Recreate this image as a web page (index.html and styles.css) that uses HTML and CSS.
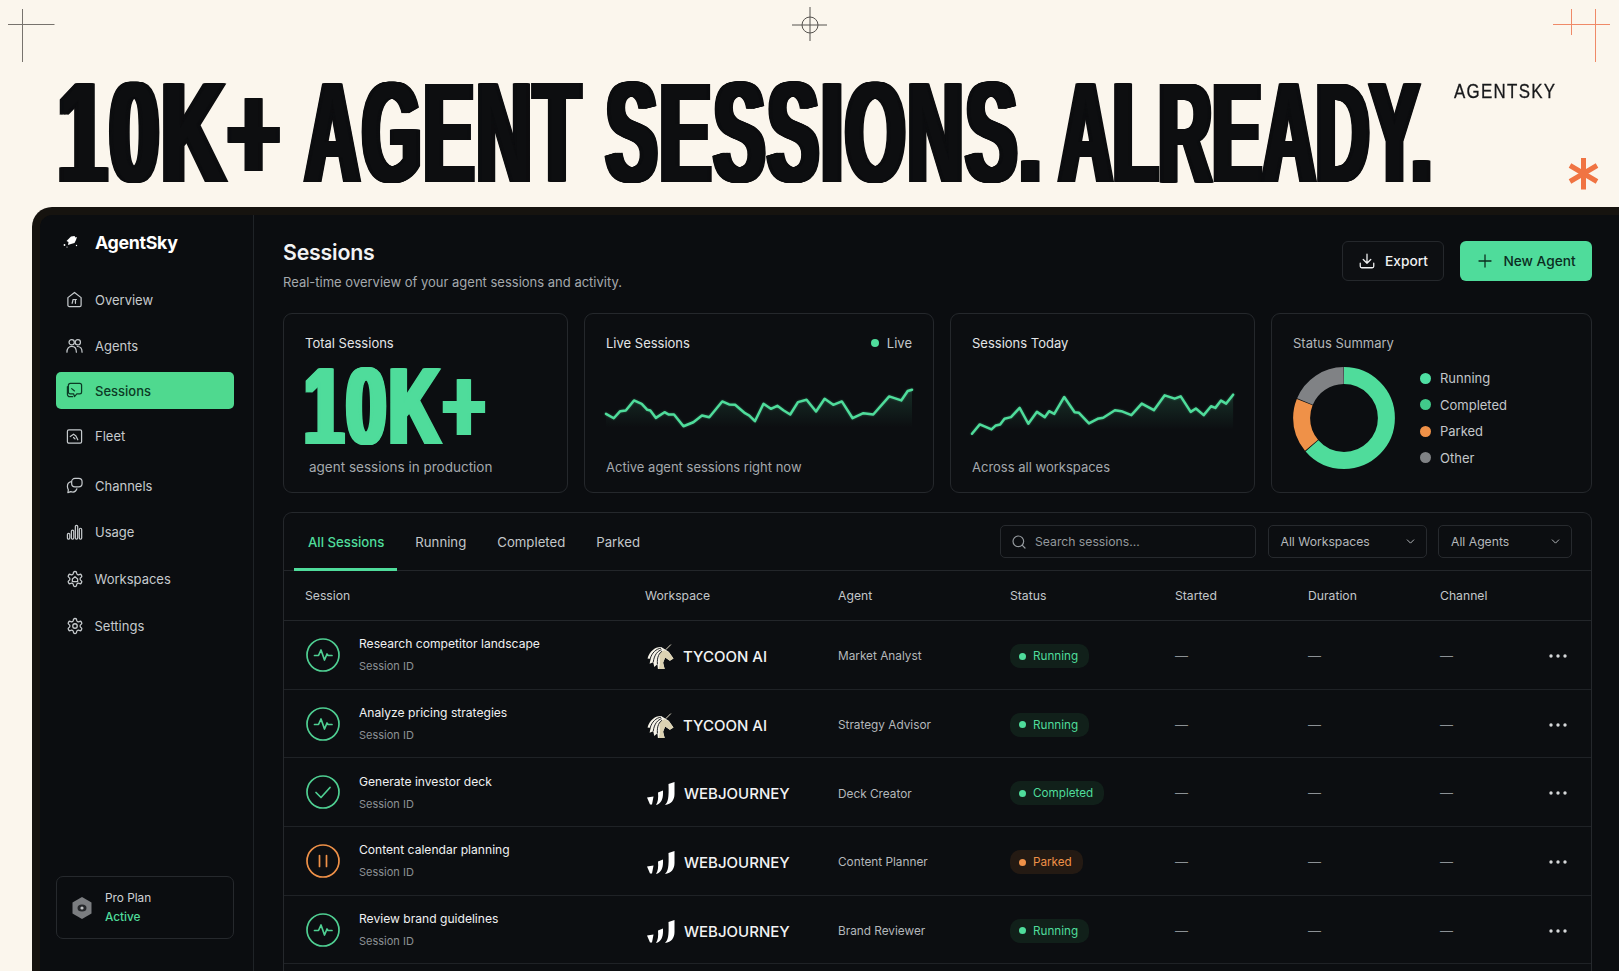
FILE: index.html
```html
<!DOCTYPE html>
<html lang="en">
<head>
<meta charset="utf-8">
<title>AgentSky</title>
<link rel="stylesheet" href="styles.css">
</head>
<body>
<svg width="0" height="0" class="defs">
  <defs>
    <linearGradient id="fade" x1="0" y1="0" x2="0" y2="1">
      <stop offset="0" stop-color="#4fdc9b" stop-opacity=".16"/>
      <stop offset=".85" stop-color="#4fdc9b" stop-opacity="0"/>
    </linearGradient>
    <symbol id="gear" viewBox="0 0 24 24"><path d="M12.22 2h-.44a2 2 0 0 0-2 2v.18a2 2 0 0 1-1 1.73l-.43.25a2 2 0 0 1-2 0l-.15-.08a2 2 0 0 0-2.73.73l-.22.38a2 2 0 0 0 .73 2.73l.15.1a2 2 0 0 1 1 1.72v.51a2 2 0 0 1-1 1.74l-.15.09a2 2 0 0 0-.73 2.73l.22.38a2 2 0 0 0 2.73.73l.15-.08a2 2 0 0 1 2 0l.43.25a2 2 0 0 1 1 1.73V20a2 2 0 0 0 2 2h.44a2 2 0 0 0 2-2v-.18a2 2 0 0 1 1-1.73l.43-.25a2 2 0 0 1 2 0l.15.08a2 2 0 0 0 2.73-.73l.22-.39a2 2 0 0 0-.73-2.73l-.15-.08a2 2 0 0 1-1-1.74v-.5a2 2 0 0 1 1-1.74l.15-.09a2 2 0 0 0 .73-2.73l-.22-.38a2 2 0 0 0-2.73-.73l-.15.08a2 2 0 0 1-2 0l-.43-.25a2 2 0 0 1-1-1.73V4a2 2 0 0 0-2-2z"/></symbol>
    <symbol id="horse" viewBox="0 0 26 24">
      <path fill="#f6f3e8" stroke="none" d="M14 3C8 2.500 2.500 7 .5 14L3.500 14.500 2.500 19 6 17.500 7 22 10 19.500 10.500 24H17L15.500 18 17.500 13 22 16 25.500 14 21 7.500z"/>
      <path fill="#dcd2b2" stroke="none" d="M12 12C12 9 14 6.500 17 6L21 8 25.500 14 22 16 17.500 13 15.500 18 17 24H11C13 20 12.500 15 12 12z"/>
      <path fill="none" stroke="#12141a" stroke-width=".9" d="M13.500 4C9 4.500 4.500 8.500 3 14.500M14 5.500C10.500 6.500 7 10 6 17.500M14.500 7C12 8.500 9.500 12 10 19.500"/>
      <path fill="none" stroke="#efe8d2" stroke-width=".9" d="M18 5.500 23 .5"/>
    </symbol>
    <symbol id="wj" viewBox="0 0 28 23">
      <path fill="#fff" stroke="none" d="M0 15.500 6.500 14.500 5 22.500 3 22.500zM16 8.500V11.500C16 17 14 22 9 23 11 20 11.500 16 11 10.500zM27.500 0V12C27.500 18 24.500 22 18 23 21 20 22 16 21.500 2z"/>
    </symbol>
    <symbol id="pulse" viewBox="0 0 34 34"><circle cx="17" cy="17" r="16"/><path d="M8.500 17.500h4l2.500-5.500 3.500 10 2.500-6 1 1.500h4"/></symbol>
    <symbol id="dots" viewBox="0 0 18 4"><circle cx="2" cy="2" r="1.700"/><circle cx="9" cy="2" r="1.700"/><circle cx="16" cy="2" r="1.700"/></symbol>
  </defs>
</svg>

<header class="hero">
  <svg class="marks" width="1619" height="207" viewBox="0 0 1619 207" fill="none">
    <path stroke="#77736d" d="M8 24.500h46.500M22.500 9v53"/>
    <path stroke="#55524e" d="M792 25h35M810 7v34"/>
    <circle cx="810" cy="25" r="8" stroke="#55524e"/>
    <path stroke="#ef8a68" d="M1553 24.500h57M1571.500 9v26M1595.500 9v53"/>
    <path stroke="#f07443" stroke-width="5" d="M1583.500 158v31.500M1570 165.500l27 16M1597 165.500l-27 16"/>
  </svg>
  <h1 class="headline">
    <span class="word w1">10K+</span>
    <span class="word w2">AGENT</span>
    <span class="word w3">SESSIONS.</span>
    <span class="word w4">ALREADY.</span>
  </h1>
  <div class="brandmark">AGENTSKY</div>
</header>

<div class="panel">
  <aside class="sidebar">
    <div class="logo">
      <svg width="16" height="16" viewBox="0 0 16 16" fill="#fff"><path d="M5 5.500 8 2.500l3.500-.5 1 1.500 1.500-.5-1 3-1.500 3L8 10 5 11l.5-3L3.500 7z"/><circle cx="1.500" cy="11" r=".9"/><circle cx="13.500" cy="11.500" r=".7"/><circle cx="4" cy="13" r=".6"/></svg>
      <span>AgentSky</span>
    </div>
    <nav class="nav">
      <a class="nav-item"><svg class="ni" viewBox="0 0 18 18"><path d="M2 7 9 1.500 16 7v8a1.500 1.500 0 0 1-1.500 1.500h-11A1.500 1.500 0 0 1 2 15z"/><path d="M6.500 13 7.500 9h3.500M10 9v4"/></svg>Overview</a>
      <a class="nav-item"><svg class="ni" viewBox="0 0 18 18"><circle cx="6" cy="4.500" r="2.800"/><circle cx="12.500" cy="4.500" r="2.800"/><path d="M1 15c0-4 2-6.200 5-6.200S11 11 11 15M12 9c3 0 5 2 5 6"/></svg>Agents</a>
      <a class="nav-item active"><svg class="ni" viewBox="0 0 18 18"><path d="M4.500 1.500h10A2 2 0 0 1 16.500 3.500v7a2 2 0 0 1-2 2h-3L9 15.500l-1-3H4.500a2 2 0 0 1-2-2v-7a2 2 0 0 1 2-2z"/><path d="M1.500 5v8a2.500 2.500 0 0 0 2.500 2.500h3M6 7l3 2.500"/></svg>Sessions</a>
      <a class="nav-item item-fleet"><svg class="ni" viewBox="0 0 18 18"><rect x="1.500" y="2" width="15" height="14" rx="1.500"/><path d="M4.500 9 8 6.500l2.500 2 2 4M8 10l1.500 1.500"/></svg>Fleet</a>
      <a class="nav-item item-channels"><svg class="ni" viewBox="0 0 18 18"><rect x="6" y="1.500" width="11" height="9" rx="3.500"/><path d="M5.500 5C3 5.500 1.500 7.500 1.500 10c0 1.500.5 2.500 1 3.500L2 16.500l3-1c3 1 5.500 0 6.500-3"/></svg>Channels</a>
      <a class="nav-item"><svg class="ni" viewBox="0 0 18 18"><rect x="1.500" y="10" width="2.500" height="6" rx="1.200"/><rect x="5.700" y="6.500" width="2.500" height="9.500" rx="1.200"/><rect x="9.900" y="1.500" width="2.500" height="14.500" rx="1.200"/><rect x="14.100" y="4.500" width="2.500" height="11.500" rx="1.200"/></svg>Usage</a>
      <a class="nav-item"><svg class="ni ni-gear" viewBox="0 0 24 24"><use href="#gear"/><path d="M8.500 12 12 9l3.500 3v3.500h-7z"/></svg>Workspaces</a>
      <a class="nav-item"><svg class="ni ni-gear" viewBox="0 0 24 24"><use href="#gear"/><circle cx="12" cy="12" r="3"/></svg>Settings</a>
    </nav>
    <div class="plan">
      <svg width="20" height="22" viewBox="0 0 20 22"><path fill="#7b7d80" d="M10 0 19.500 5.500v11L10 22 .5 16.500v-11z"/><ellipse cx="10" cy="11" rx="4.500" ry="3.500" fill="#26282b"/><circle cx="10" cy="11" r="1.600" fill="#bfc1c3"/></svg>
      <div class="plan-text">
        <div class="plan-name">Pro Plan</div>
        <div class="plan-state">Active</div>
      </div>
    </div>
  </aside>

  <main class="main">
    <div class="topbar">
      <div>
        <h2 class="page-title">Sessions</h2>
        <p class="page-sub">Real-time overview of your agent sessions and activity.</p>
      </div>
      <div class="actions">
        <button class="btn btn-ghost"><svg viewBox="0 0 24 24" width="18" height="18"><path d="M21 15v4a2 2 0 0 1-2 2H5a2 2 0 0 1-2-2v-4M7 10l5 5 5-5M12 15V3"/></svg>Export</button>
        <button class="btn btn-primary"><svg viewBox="0 0 24 24" width="18" height="18"><path d="M12 4v16M4 12h16"/></svg>New Agent</button>
      </div>
    </div>

    <section class="cards">
      <div class="card">
        <div class="card-title">Total Sessions</div>
        <div class="card-body"><span class="big">10K+</span></div>
        <div class="card-sub sub-inset">agent sessions in production</div>
      </div>
      <div class="card">
        <div class="card-title card-title-row">Live Sessions<span class="live"><i class="dot"></i>Live</span></div>
        <div class="card-body">
          <svg class="spark spark-live" viewBox="772 260 711 140" preserveAspectRatio="none">
            <path class="area" d="M772 340 790 353 805 332 818 330 837 300 855 310 868 328 875 330 888 352 908 335 918 342 930 342 952 377 975 365 995 345 1012 350 1042 303 1058 312 1072 313 1095 338 1105 345 1118 362 1138 310 1155 325 1170 316 1185 330 1200 342 1218 305 1238 298 1260 333 1280 295 1300 313 1320 303 1345 353 1370 338 1393 342 1430 288 1458 300 1473 272 1483 268V400H772Z"/>
            <path class="line" d="M772 340 790 353 805 332 818 330 837 300 855 310 868 328 875 330 888 352 908 335 918 342 930 342 952 377 975 365 995 345 1012 350 1042 303 1058 312 1072 313 1095 338 1105 345 1118 362 1138 310 1155 325 1170 316 1185 330 1200 342 1218 305 1238 298 1260 333 1280 295 1300 313 1320 303 1345 353 1370 338 1393 342 1430 288 1458 300 1473 272 1483 268"/>
          </svg>
        </div>
        <div class="card-sub">Active agent sessions right now</div>
      </div>
      <div class="card">
        <div class="card-title">Sessions Today</div>
        <div class="card-body">
          <svg class="spark spark-today" viewBox="75 280 605 130" preserveAspectRatio="none">
            <path class="area" d="M75 403 93 375 120 390 130 378 140 375 150 358 165 353 185 325 205 373 225 337 243 353 253 335 265 343 288 292 312 338 322 340 345 372 365 358 378 355 405 332 420 335 443 347 467 312 495 332 520 287 543 297 557 290 580 337 592 327 610 347 627 320 637 325 650 303 662 312 678 285V410H75Z"/>
            <path class="line" d="M75 403 93 375 120 390 130 378 140 375 150 358 165 353 185 325 205 373 225 337 243 353 253 335 265 343 288 292 312 338 322 340 345 372 365 358 378 355 405 332 420 335 443 347 467 312 495 332 520 287 543 297 557 290 580 337 592 327 610 347 627 320 637 325 650 303 662 312 678 285"/>
          </svg>
        </div>
        <div class="card-sub">Across all workspaces</div>
      </div>
      <div class="card">
        <div class="card-title muted">Status Summary</div>
        <div class="summary">
          <svg class="donut" width="104" height="104" viewBox="0 0 104 104">
            <g fill="none" stroke-width="17" transform="rotate(-90 52 52)">
              <circle cx="52" cy="52" r="42.400" stroke="#4fdc9b" pathLength="360" stroke-dasharray="229 131"/>
              <circle cx="52" cy="52" r="42.400" stroke="#ef9148" pathLength="360" stroke-dasharray="62 298" stroke-dashoffset="-230"/>
              <circle cx="52" cy="52" r="42.400" stroke="#808285" pathLength="360" stroke-dasharray="66.500 293.500" stroke-dashoffset="-293"/>
            </g>
          </svg>
          <ul class="legend">
            <li><i class="ld ld-run"></i>Running</li>
            <li><i class="ld ld-done"></i>Completed</li>
            <li><i class="ld ld-park"></i>Parked</li>
            <li><i class="ld ld-other"></i>Other</li>
          </ul>
        </div>
      </div>
    </section>

    <section class="table">
      <div class="toolbar">
        <div class="tabs">
          <a class="tab active">All Sessions</a>
          <a class="tab">Running</a>
          <a class="tab">Completed</a>
          <a class="tab">Parked</a>
        </div>
        <div class="filters">
          <div class="field search"><svg viewBox="0 0 24 24" width="16" height="16"><circle cx="11" cy="11" r="8"/><path d="m21 21-4.300-4.300"/></svg>Search sessions...</div>
          <div class="field select sel-ws">All Workspaces<svg viewBox="0 0 24 24" width="13" height="13"><path d="m6 9 6 6 6-6"/></svg></div>
          <div class="field select sel-ag">All Agents<svg viewBox="0 0 24 24" width="13" height="13"><path d="m6 9 6 6 6-6"/></svg></div>
        </div>
      </div>
      <div class="tr thead">
        <div>Session</div><div>Workspace</div><div>Agent</div><div>Status</div><div>Started</div><div>Duration</div><div>Channel</div><div></div>
      </div>

      <div class="tr row">
        <div class="sess"><svg class="ri ri-green" width="34" height="34"><use href="#pulse"/></svg><div><div class="s-title">Research competitor landscape</div><div class="s-id">Session ID</div></div></div>
        <div class="ws"><svg class="ws-logo" width="27" height="25"><use href="#horse"/></svg>TYCOON AI</div>
        <div class="agent">Market Analyst</div>
        <div class="nudge"><span class="pill pill-green"><i></i>Running</span></div>
        <div class="dash">—</div><div class="dash">—</div><div class="dash">—</div>
        <div class="nudge"><svg class="more" width="18" height="4"><use href="#dots"/></svg></div>
      </div>
      <div class="tr row">
        <div class="sess"><svg class="ri ri-green" width="34" height="34"><use href="#pulse"/></svg><div><div class="s-title">Analyze pricing strategies</div><div class="s-id">Session ID</div></div></div>
        <div class="ws"><svg class="ws-logo" width="27" height="25"><use href="#horse"/></svg>TYCOON AI</div>
        <div class="agent">Strategy Advisor</div>
        <div class="nudge"><span class="pill pill-green"><i></i>Running</span></div>
        <div class="dash">—</div><div class="dash">—</div><div class="dash">—</div>
        <div class="nudge"><svg class="more" width="18" height="4"><use href="#dots"/></svg></div>
      </div>
      <div class="tr row">
        <div class="sess"><svg class="ri ri-green" width="34" height="34" viewBox="0 0 34 34"><circle cx="17" cy="17" r="16"/><path d="M10 17.500l5 5 9-10"/></svg><div><div class="s-title">Generate investor deck</div><div class="s-id">Session ID</div></div></div>
        <div class="ws"><svg class="ws-logo" width="28" height="23"><use href="#wj"/></svg>WEBJOURNEY</div>
        <div class="agent">Deck Creator</div>
        <div class="nudge"><span class="pill pill-green"><i></i>Completed</span></div>
        <div class="dash">—</div><div class="dash">—</div><div class="dash">—</div>
        <div class="nudge"><svg class="more" width="18" height="4"><use href="#dots"/></svg></div>
      </div>
      <div class="tr row">
        <div class="sess"><svg class="ri ri-orange" width="34" height="34" viewBox="0 0 34 34"><circle cx="17" cy="17" r="16"/><path d="M13.500 11.500v11M20.500 11.500v11"/></svg><div><div class="s-title">Content calendar planning</div><div class="s-id">Session ID</div></div></div>
        <div class="ws"><svg class="ws-logo" width="28" height="23"><use href="#wj"/></svg>WEBJOURNEY</div>
        <div class="agent">Content Planner</div>
        <div class="nudge"><span class="pill pill-orange"><i></i>Parked</span></div>
        <div class="dash">—</div><div class="dash">—</div><div class="dash">—</div>
        <div class="nudge"><svg class="more" width="18" height="4"><use href="#dots"/></svg></div>
      </div>
      <div class="tr row">
        <div class="sess"><svg class="ri ri-green" width="34" height="34"><use href="#pulse"/></svg><div><div class="s-title">Review brand guidelines</div><div class="s-id">Session ID</div></div></div>
        <div class="ws"><svg class="ws-logo" width="28" height="23"><use href="#wj"/></svg>WEBJOURNEY</div>
        <div class="agent">Brand Reviewer</div>
        <div class="nudge"><span class="pill pill-green"><i></i>Running</span></div>
        <div class="dash">—</div><div class="dash">—</div><div class="dash">—</div>
        <div class="nudge"><svg class="more" width="18" height="4"><use href="#dots"/></svg></div>
      </div>
    </section>
  </main>
</div>
</body>
</html>
```
FILE: styles.css
```css
* { box-sizing: border-box; }
html, body { margin: 0; height: 971px; overflow: hidden; }
body { background: #fbf6ed; font-family: Inter, "Liberation Sans", sans-serif; color: #e8eaec; display: flex; flex-direction: column; }
.defs { position: absolute; }
h1, h2, p, ul { margin: 0; padding: 0; }

.hero { position: relative; height: 207px; flex: none; padding: 63px 0 0 58px; }
.marks { position: absolute; inset: 0; }
.headline {
  display: flex;
  font: 700 142px/140px "Liberation Sans", sans-serif;
  color: #0d0e10;
  white-space: nowrap;
}
.word {
  display: block; flex: none;
  transform-origin: 0 0;
  letter-spacing: 5px;
  text-shadow: 1px 0 #0d0e10, -1px 0 #0d0e10, 2px 0 #0d0e10, -2px 0 #0d0e10, 3px 0 #0d0e10, -3px 0 #0d0e10, 4px 0 #0d0e10, -4px 0 #0d0e10, 5px 0 #0d0e10, -5px 0 #0d0e10, 6px 0 #0d0e10, -6px 0 #0d0e10, 7px 0 #0d0e10, -7px 0 #0d0e10;
}
.w1 { width: 247px; transform: scaleX(.617); }
.w2 { width: 301px; transform: scaleX(.532); }
.w3 { width: 453px; transform: scaleX(.54); }
.w4 { width: 372px; transform: scaleX(.52); letter-spacing: 1px; }
.brandmark {
  position: absolute; left: 1454px; top: 78px;
  font: 400 21px/26px "Liberation Sans", sans-serif;
  color: #17181a; letter-spacing: 1.6px;
  -webkit-text-stroke: .3px #17181a;
  transform: scaleX(.805); transform-origin: 0 0;
}

.panel {
  flex: 1; min-height: 0; margin-left: 32px;
  background: #0b0d10;
  border: solid #16130f; border-width: 8px 0 0 8px;
  border-radius: 20px 0 0 0;
  display: flex;
}

.sidebar { width: 214px; flex: none; border-right: 1px solid #1f2327; padding: 13px 19px 32px 16px; display: flex; flex-direction: column; }
.logo { display: flex; align-items: center; gap: 16px; height: 28px; margin-left: 7px; font-size: 17.800px; font-weight: 700; letter-spacing: -.3px; color: #fff; margin-bottom: 25px; }
.nav { display: flex; flex-direction: column; gap: 9.600px; }
.nav-item { height: 37px; flex: none; display: flex; align-items: center; gap: 12px; padding-left: 10px; font-size: 13px; color: #c6cacd; border-radius: 5px; }
.nav-item.active { background: #4fd98f; color: #0c3a25; font-weight: 500; margin: -2px 0 -1px; }
.item-fleet { margin-bottom: 3px; }
.ni { width: 17px; height: 17px; flex: none; fill: none; stroke: currentColor; stroke-width: 1.300; stroke-linejoin: round; stroke-linecap: round; }
.ni-gear { stroke-width: 1.700; width: 18px; height: 18px; margin: 0 -1px 0 -.5px; }
.plan { margin-top: auto; height: 63px; border: 1px solid #26292d; border-radius: 7px; display: flex; align-items: center; gap: 13px; padding-left: 15px; }
.plan-text { font-size: 11.800px; line-height: 19px; }
.plan-name { color: #cfd2d5; }
.plan-state { color: #4fdc9b; font-weight: 500; }

.main { flex: 1; min-width: 0; padding: 23px 27px 0 29px; display: flex; flex-direction: column; }
.topbar { display: flex; justify-content: space-between; height: 75px; flex: none; }
.page-title { font-size: 21.300px; line-height: 28px; font-weight: 600; color: #f2f3f4; letter-spacing: -.2px; }
.page-sub { font-size: 13px; line-height: 20px; margin-top: 6px; color: #a4a9ad; }
.actions { display: flex; gap: 16px; margin-top: 3px; }
.btn { height: 40px; border-radius: 6px; font: 500 13.700px Inter, sans-serif; display: flex; align-items: center; gap: 9px; padding: 0; justify-content: center; }
.btn svg { fill: none; stroke: currentColor; stroke-width: 1.700; stroke-linecap: round; stroke-linejoin: round; }
.btn-ghost { width: 102px; background: #0d0f12; border: 1px solid #25282c; color: #f0f1f2; }
.btn-primary { width: 132px; background: #4fdc9b; border: 0; color: #0b2c1f; }

.cards { display: grid; grid-template-columns: 285fr 350fr 305fr 321fr; gap: 16px; height: 179.500px; flex: none; }
.card { border: 1px solid #25282c; border-radius: 9px; padding: 19px 21px 15px; display: flex; flex-direction: column; background: #0c0e11; min-width: 0; }
.card-title { font-size: 13px; line-height: 20px; color: #e3e5e7; }
.card-title.muted { color: #b3b7ba; }
.card-title-row { display: flex; justify-content: space-between; }
.live { display: flex; align-items: center; gap: 8px; color: #c3c7ca; }
.dot { width: 8px; height: 8px; border-radius: 50%; background: #4fdc9b; }
.card-body { flex: 1; min-height: 0; position: relative; }
.card-sub { font-size: 13px; line-height: 20px; color: #a4a9ad; white-space: nowrap; }
.sub-inset { margin-left: 4px; font-size: 13.500px; }
.big {
  display: block; width: 300px; margin: 13px 0 0 -1px;
  font: 700 110px/80px "Liberation Sans", sans-serif;
  color: #4fdc9b; letter-spacing: 4px;
  transform: scaleX(.65); transform-origin: 0 0;
  text-shadow: 1px 0 #4fdc9b, -1px 0 #4fdc9b, 2px 0 #4fdc9b, -2px 0 #4fdc9b, 3px 0 #4fdc9b, -3px 0 #4fdc9b, 4px 0 #4fdc9b, -4px 0 #4fdc9b, 5px 0 #4fdc9b, -5px 0 #4fdc9b;
}
.spark { display: block; width: 100%; overflow: visible; }
.spark-live { margin-top: 34px; height: 47px; }
.spark-today { margin-top: 40px; height: 43px; width: 262px; }
.spark .line { fill: none; stroke: #4fdc9b; stroke-width: 2.500; stroke-linejoin: round; stroke-linecap: round; vector-effect: non-scaling-stroke; filter: drop-shadow(0 0 3px rgba(79, 220, 155, .35)); }
.spark .area { fill: url(#fade); stroke: none; }

.summary { display: flex; align-items: center; gap: 24px; margin-top: 13px; }
.donut { flex: none; margin-left: -1px; }
.legend { list-style: none; display: flex; flex-direction: column; gap: 6.500px; font-size: 13px; line-height: 20px; color: #c3c7ca; }
.legend li { display: flex; align-items: center; gap: 9px; }
.ld { width: 11px; height: 11px; border-radius: 50%; }
.ld-run { background: #4fdfa3; }
.ld-done { background: #41c98a; }
.ld-park { background: #ef9148; }
.ld-other { background: #808285; }

.table { flex: 1; min-height: 0; margin-top: 19.500px; border: 1px solid #25282c; border-bottom: 0; border-radius: 9px 9px 0 0; background: #0c0e11; }
.toolbar { height: 58px; border-bottom: 1px solid #23262a; display: flex; justify-content: space-between; padding-right: 19px; }
.tabs { display: flex; margin-left: 8.500px; }
.tab { position: relative; padding: 0 15.500px; font-size: 13.200px; line-height: 59px; height: 57px; color: #c3c7ca; white-space: nowrap; }
.tab.active { color: #4fdc9b; font-weight: 500; }
.tab.active::after { content: ""; position: absolute; left: 1.500px; right: 3px; bottom: -1px; height: 3px; background: #4fdc9b; }
.filters { display: flex; gap: 11.500px; padding-top: 12px; }
.field { height: 33px; border: 1px solid #272a2e; border-radius: 5px; display: flex; align-items: center; font-size: 12.200px; color: #b4b8bb; white-space: nowrap; }
.field svg { fill: none; stroke: currentColor; stroke-width: 1.800; stroke-linecap: round; stroke-linejoin: round; flex: none; }
.search { width: 256px; padding-left: 10px; gap: 8px; color: #94999d; }
.select { justify-content: space-between; padding: 0 9px 0 12px; }
.sel-ws { width: 159px; }
.sel-ag { width: 134px; }

.tr { display: grid; grid-template-columns: 340px 193px 172px 165px 133px 132px 109px 1fr; padding-left: 21px; align-items: center; border-bottom: 1px solid #1f2226; }
.thead { height: 50px; font-size: 12.200px; color: #c3c7ca; border-bottom-color: #23262a; }
.row { height: 68.700px; }
.sess { display: flex; align-items: center; gap: 19px; padding-left: 1px; }
.ri { fill: none; stroke-width: 1.700; stroke-linecap: round; stroke-linejoin: round; flex: none; }
.ri-green { stroke: #4fcf92; }
.ri-orange { stroke: #ef9148; }
.s-title { font-size: 12.100px; line-height: 18px; color: #f0f1f2; white-space: nowrap; }
.s-id { font-size: 11px; line-height: 16px; margin-top: 5px; color: #8c9195; }
.ws { display: flex; align-items: center; gap: 9px; font-size: 15px; font-weight: 500; color: #f2f3f4; padding: 3px 0 0 2px; white-space: nowrap; }
.ws-logo { flex: none; }
.agent { font-size: 11.800px; color: #b4b8bb; white-space: nowrap; padding-top: 3px; }
.nudge { padding-top: 2px; }
.pill { display: inline-flex; align-items: center; gap: 7px; height: 24px; padding: 0 11px 0 9px; border-radius: 10px; font-size: 11.700px; }
.pill i { width: 7px; height: 7px; border-radius: 50%; background: currentColor; }
.pill-green { background: #11201a; color: #4fdc9b; }
.pill-orange { background: #241a13; color: #ef9148; }
.dash { font-size: 13px; color: #8c9195; padding-top: 2px; }
.more { fill: #d6d8da; display: block; }
```
